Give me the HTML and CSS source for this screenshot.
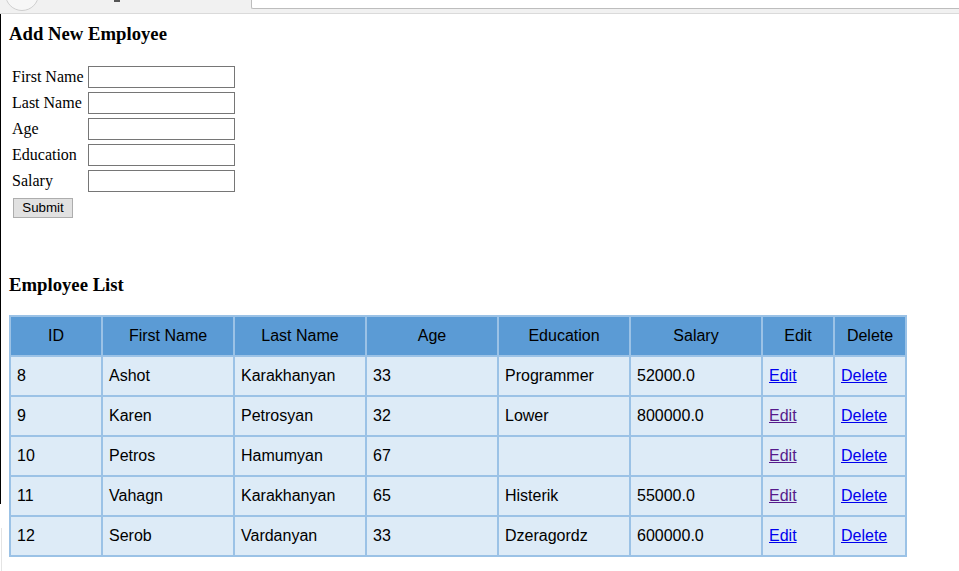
FILE: index.html
```html
<!DOCTYPE html>
<html>
<head>
<meta charset="utf-8">
<title>Employees</title>
<link rel="stylesheet" href="styles.css">
</head>
<body>
<div class="chrome">
  <div class="chrome-btn"></div>
  <div class="chrome-icon"></div>
  <div class="chrome-address"></div>
</div>
<div class="page">
  <h3 class="heading first-heading">Add New Employee</h3>
  <form class="emp-form">
    <table class="form-table">
      <tr><td class="lbl">First Name</td><td><input class="field" type="text"></td></tr>
      <tr><td class="lbl">Last Name</td><td><input class="field" type="text"></td></tr>
      <tr><td class="lbl">Age</td><td><input class="field" type="text"></td></tr>
      <tr><td class="lbl">Education</td><td><input class="field" type="text"></td></tr>
      <tr><td class="lbl">Salary</td><td><input class="field" type="text"></td></tr>
      <tr><td colspan="2"><button class="submit" type="button">Submit</button></td></tr>
    </table>
  </form>
  <h3 class="heading list-heading">Employee List</h3>
  <table class="emp-table">
    <thead>
      <tr>
        <th class="c-id">ID</th><th class="c-w">First Name</th><th class="c-w">Last Name</th><th class="c-w">Age</th><th class="c-w">Education</th><th class="c-w">Salary</th><th class="c-s">Edit</th><th class="c-s">Delete</th>
      </tr>
    </thead>
    <tbody>
      <tr><td>8</td><td>Ashot</td><td>Karakhanyan</td><td>33</td><td>Programmer</td><td>52000.0</td><td><a class="lnk" href="#e8">Edit</a></td><td><a class="lnk" href="#d8">Delete</a></td></tr>
      <tr><td>9</td><td>Karen</td><td>Petrosyan</td><td>32</td><td>Lower</td><td>800000.0</td><td><a class="lnk visited" href="#e9">Edit</a></td><td><a class="lnk" href="#d9">Delete</a></td></tr>
      <tr><td>10</td><td>Petros</td><td>Hamumyan</td><td>67</td><td></td><td></td><td><a class="lnk visited" href="#e10">Edit</a></td><td><a class="lnk" href="#d10">Delete</a></td></tr>
      <tr><td>11</td><td>Vahagn</td><td>Karakhanyan</td><td>65</td><td>Histerik</td><td>55000.0</td><td><a class="lnk visited" href="#e11">Edit</a></td><td><a class="lnk" href="#d11">Delete</a></td></tr>
      <tr><td>12</td><td>Serob</td><td>Vardanyan</td><td>33</td><td>Dzeragordz</td><td>600000.0</td><td><a class="lnk" href="#e12">Edit</a></td><td><a class="lnk" href="#d12">Delete</a></td></tr>
    </tbody>
  </table>
</div>
</body>
</html>
```
FILE: styles.css
```css
html, body {
  margin: 0;
  padding: 0;
  background: #ffffff;
}
body {
  font-family: "Liberation Serif", "Times New Roman", serif;
  font-size: 16px;
  color: #000;
  position: relative;
  min-height: 571px;
}
body::before {
  content: "";
  position: absolute;
  left: 0;
  top: 14px;
  width: 1px;
  height: 490px;
  background: #000;
}
body::after {
  content: "";
  position: absolute;
  left: 1px;
  top: 528px;
  width: 1px;
  height: 43px;
  background: #e4e4e4;
}

/* browser chrome strip */
.chrome {
  height: 13px;
  background: #f1f1f1;
  border-bottom: 1px solid #dadada;
  display: flex;
  align-items: flex-start;
  overflow: hidden;
}
.chrome-btn {
  width: 32px;
  height: 32px;
  margin: -23px 0 0 5px;
  border: 1px solid #cfcfcf;
  border-radius: 50%;
  background: #f7f7f7;
  flex: none;
}
.chrome-icon {
  width: 6px;
  height: 2px;
  margin-left: 75px;
  background: #555;
  flex: none;
}
.chrome-address {
  flex: 1;
  height: 27px;
  margin: -20px 0 0 131px;
  background: #fff;
  border: 1px solid #bdbdbd;
  border-right: none;
  border-radius: 2px 0 0 2px;
}

.page {
  padding: 8px 8px 0 9px;
}
.heading {
  font-family: "Liberation Serif", "Times New Roman", serif;
  font-size: 18.72px;
  font-weight: bold;
  line-height: 22px;
  margin: 0 0 19px 0;
}
.first-heading {
  padding-top: 1px;
  margin-bottom: 18px;
}
.list-heading {
  margin-top: 53px;
}

.form-table {
  border-spacing: 2px;
  border-collapse: separate;
}
.form-table td {
  padding: 1px;
  vertical-align: middle;
  white-space: nowrap;
  line-height: 22px;
}
.field {
  display: block;
  width: 147px;
  height: 22px;
  box-sizing: border-box;
  border: 1px solid #767676;
  padding: 1px 2px;
  margin: 0;
  font-family: "Liberation Sans", Arial, sans-serif;
  font-size: 13.33px;
  background: #fff;
}
.submit {
  display: block;
  margin: 2px 0 0 1px;
  width: 60px;
  height: 20px;
  box-sizing: border-box;
  padding: 0;
  border: 1px solid #adadad;
  background: #e1e1e1;
  font-family: "Liberation Sans", Arial, sans-serif;
  font-size: 13.33px;
  color: #000;
  line-height: 16px;
}

.emp-table {
  border-collapse: separate;
  border-spacing: 2px;
  background: #9bc2e6;
  font-family: "Liberation Sans", Arial, sans-serif;
  font-size: 16px;
}
.emp-table th,
.emp-table td {
  height: 38px;
  box-sizing: border-box;
  padding: 0 6px;
  vertical-align: middle;
}
.emp-table th {
  background: #5b9bd5;
  font-weight: normal;
  text-align: center;
  color: #000;
}
.emp-table td {
  background: #ddebf7;
  text-align: left;
  color: #000;
}
.c-id { width: 90px; }
.c-w { width: 130px; }
.c-s { width: 70px; }
.lnk {
  color: #0000ee;
  text-decoration: underline;
}
.lnk.visited {
  color: #551a8b;
}
```
